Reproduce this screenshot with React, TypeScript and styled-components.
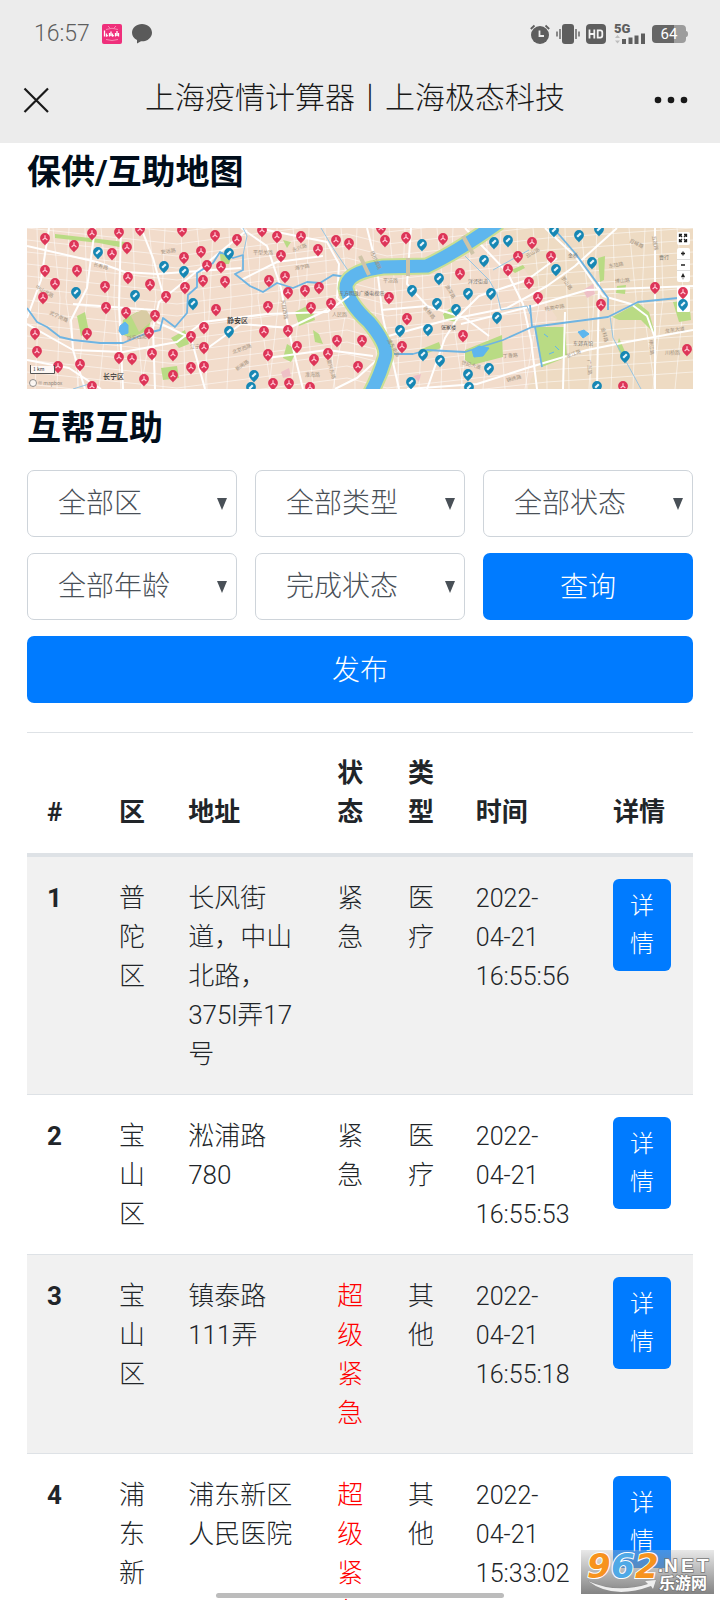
import React from 'react';
import styled, { createGlobalStyle } from 'styled-components';

const GlobalStyle = createGlobalStyle`
  *, *::before, *::after { box-sizing: border-box; }
  body {
    margin: 0;
    background: #fff;
    color: #212529;
    font-family: Roboto, "Noto Sans CJK SC", sans-serif;
    font-weight: 300;
  }
  button, select { font: inherit; }
`;

const Screen = styled.div`
  position: relative;
  height: 100vh;
  overflow: hidden;
`;

const TopArea = styled.header`
  background: #ececec;
`;

const StatusBar = styled.div`
  display: flex;
  justify-content: space-between;
  height: 56px;
  padding: 12px 32px 0 34px;
  color: #5e5e5e;
`;

const StatusGroup = styled.div<{ $gap: number }>`
  display: flex;
  align-items: center;
  gap: ${(p) => p.$gap}px;
`;

const Clock = styled.span`
  width: 58px;
  font-size: 23px;
  line-height: 40px;
`;

const NavBar = styled.div`
  display: flex;
  align-items: center;
  justify-content: space-between;
  height: 87px;
  padding: 0 32px 0 22px;
`;

const NavTitle = styled.h1`
  margin: 0;
  padding: 0 0 4px 6px;
  color: #191919;
  font-size: 30px;
  font-weight: 300;
  line-height: 40px;
  white-space: nowrap;
`;

const IconButton = styled.button`
  display: flex;
  padding: 0;
  border: 0;
  background: none;
  color: #191919;
`;

const Content = styled.main`
  padding: 9px 27px 0;
`;

const SectionTitle = styled.h2`
  margin: 0;
  color: #000d1a;
  font-size: 34px;
  font-weight: 700;
  line-height: 40px;
`;

const MapFigure = styled.figure`
  margin: 36px 0 19px;
  svg { display: block; width: 100%; height: auto; }
`;

const Filters = styled.form`
  display: grid;
  grid-template-columns: repeat(3, 1fr);
  gap: 16px 18px;
  margin: 22px 0 29px;
`;

const SelectBox = styled.label`
  position: relative;
  display: block;
  svg {
    position: absolute;
    top: 28px;
    right: 9px;
    pointer-events: none;
  }
`;

const Select = styled.select`
  appearance: none;
  display: block;
  width: 100%;
  height: 67px;
  padding: 0 30px;
  border: 1px solid #ced4da;
  border-radius: 7px;
  background: #fff;
  color: #495057;
  font-size: 28px;
`;

const PrimaryButton = styled.button<{ $wide?: boolean }>`
  grid-column: ${(p) => (p.$wide ? '1 / -1' : 'auto')};
  height: 67px;
  padding: 0 0 4px;
  border: 0;
  border-radius: 7px;
  background: #007bff;
  color: #fff;
  font-size: 28px;
`;

const Table = styled.table`
  width: 100%;
  table-layout: fixed;
  border-spacing: 0;
  font-size: 26px;
  line-height: 39px;
`;

const Column = styled.col<{ $share: number }>`
  width: ${(p) => p.$share}%;
`;

const HeadCell = styled.th`
  padding: 21px 20px;
  border-top: 1px solid #dee2e6;
  border-bottom: 4px solid #dee2e6;
  font-weight: 700;
  text-align: left;
  vertical-align: bottom;
`;

const Row = styled.tr`
  &:nth-child(odd) { background: #f1f1f1; }
  &:not(:first-child) > * { border-top: 1px solid #dee2e6; }
`;

const Cell = styled.td<{ $urgent?: boolean }>`
  padding: 22px 20px 20px;
  color: ${(p) => (p.$urgent ? '#f00' : 'inherit')};
  vertical-align: top;
`;

const IndexCell = styled(Cell)`
  font-weight: 700;
  text-align: left;
`;

const TimeCell = styled(Cell)`
  font-size: 25px;
  white-space: pre;
`;

const DetailButton = styled.button`
  display: block;
  width: 58px;
  padding: 8px 17px;
  border: 0;
  border-radius: 6px;
  background: #007bff;
  color: #fff;
  font-size: 24px;
  line-height: 38px;
`;

const HomeIndicator = styled.div`
  position: absolute;
  bottom: 2px;
  left: 30%;
  width: 40%;
  height: 5px;
  border-radius: 3px;
  background: #bcbcbc;
`;

const Watermark = styled.div`
  position: absolute;
  right: 6px;
  bottom: 6px;
  width: 133px;
  height: 44px;
  background: linear-gradient(rgba(190, 190, 190, 0.35), rgba(125, 125, 125, 0.95));
  svg { display: block; }
`;

type Point = [number, number];

const RED_PINS: Point[] = [
  [18, 10], [47, 17], [65, 5], [92, 4], [113, 1], [155, 2], [188, 7], [210, 11], [85, 25], [100, 19],
  [174, 23], [157, 29], [18, 42], [50, 42], [28, 55], [16, 69], [101, 49], [78, 58], [123, 56], [180, 37],
  [194, 38], [176, 52], [198, 53], [158, 59], [139, 68], [79, 79], [99, 84], [128, 87], [189, 81], [177, 99],
  [8, 105], [60, 105], [122, 104], [164, 108], [10, 123], [31, 138], [53, 136], [92, 129], [105, 130],
  [125, 125], [146, 126], [177, 119], [164, 139], [177, 138], [117, 151], [146, 147], [65, 158],
  [235, 2], [250, 8], [274, 8], [291, 21], [309, 12], [322, 15], [354, 0], [358, 12], [379, 9], [416, 10],
  [254, 27], [242, 52], [258, 48], [261, 64], [278, 62], [292, 59], [241, 78], [304, 75], [284, 79],
  [362, 69], [433, 45], [380, 90], [237, 103], [261, 102], [270, 118], [310, 112], [335, 112], [375, 118],
  [436, 107], [241, 126], [287, 131], [301, 125], [331, 138], [246, 155], [262, 155], [283, 159],
  [505, 14], [491, 28], [524, 28], [481, 41], [502, 54], [511, 69], [574, 76], [628, 59], [660, 121], [596, 158],
];

const BLUE_PINS: Point[] = [
  [71, 24], [49, 64], [108, 67], [137, 38], [157, 43], [202, 25], [166, 75], [202, 103],
  [395, 16], [412, 50], [385, 62], [441, 65], [410, 75], [429, 81], [373, 102], [401, 101], [396, 126],
  [413, 132], [227, 147], [224, 159], [441, 146], [384, 154], [442, 159],
  [467, 14], [481, 12], [527, 2], [552, 7], [572, 1], [457, 32], [529, 41], [565, 34], [464, 65], [470, 89],
  [598, 128], [462, 140], [570, 158],
];

const PARKS = [
  'M28 6 98 14 97 20 72 15 28 10z',
  'M96 92 110 84 124 88 122 102 104 110 94 106z',
  'M50 88 58 84 62 104 54 108z',
  'M144 110 158 102 162 116 152 120z',
  'M134 140 150 138 152 150 136 152z',
  'M193 26 206 24 202 36 194 36z',
  'M268 84 284 76 288 92 272 98z',
  'M260 116 270 122 264 134 256 130z',
  'M286 102 292 106 296 116 288 114z',
  'M416 86 424 80 430 94 418 92z',
  'M392 122 412 114 414 120 398 126z',
  'M508 99 538 99 540 129 515 139z',
  'M438 122 475 107 476 129 445 137 438 132z',
  'M585 89 611 75 622 84 628 106 614 92 592 92z',
  'M646 74 662 72 664 92 652 94z',
  'M590 58 599 57 598 66 589 65z',
  'M571 30 578 28 577 52 573 54z',
  'M592 110 600 128 596 132 590 118z',
  'M484 42 496 37 498 40 488 45z',
  'M256 12 264 14 260 20z',
];

const MAIN_ROADS = [
  'M0 18 70 34 98 44 130 46 214 40',
  'M22 0 14 52 0 90',
  'M68 0 60 60 44 92 46 122 58 161',
  'M94 0 92 78 96 161',
  'M114 0 126 30 136 66',
  'M128 161 126 100 132 74 164 48 220 2',
  'M0 96 46 122 96 124 150 114 176 94 240 86 300 84 330 62',
  'M46 76 100 80 128 82',
  'M130 94 164 110 178 161',
  'M178 122 214 96 262 100 300 82',
  'M214 0 240 18 254 60 262 104 276 161',
  'M230 0 300 14 312 36 310 70 346 104 352 130 330 150 308 161',
  'M214 52 250 34 296 28',
  'M240 130 300 122 346 128',
  'M340 0 350 40 356 90 372 161',
  'M354 82 400 78 438 90 462 108',
  'M354 110 420 92 480 80 520 58 548 38 590 0',
  'M384 0 380 56 402 80',
  'M400 161 418 110 432 88 452 68 500 52 530 30',
  'M438 0 480 44 496 76 504 112 510 161',
  'M518 0 548 28 576 68 604 76 620 88 628 110',
  'M380 161 450 156 500 140 560 122 600 114 666 102',
  'M572 54 570 161',
  'M628 0 628 161',
  'M434 96 506 78 560 62 666 58',
  'M538 84 536 161',
  'M0 132 42 140 74 161',
];

const STREAMS = [
  'M0 80 10 94 20 99 33 109 46 112 73 115 96 115 120 105 133 102 136 90 148 99 160 85 161 67 170 59 170 45 186 35 193 24 206 30 216 27 216 42 208 46 223 58 236 64 250 55 266 60 280 54 293 55 306 47 320 49',
  'M503 77 505 99 581 89 611 74 651 70',
  'M505 99 476 112 438 124 400 122 386 126 362 126',
  'M528 2 548 25 581 70 581 82',
  'M508 99 515 139',
];

const THIN_STREAMS = [
  'M216 27 220 8 216 0',
  'M294 0 306 20 322 44',
  'M438 28 462 52 470 66 474 82 500 78 503 86',
  'M466 42 502 22',
  'M583 88 586 110 596 128 614 161',
  'M46 161 62 156 68 161',
];

// Side streets: two skewed families of parallel lines covering the map.
const SIDE_STREETS = [
  ...Array.from({ length: 42 }, (_, i) => {
    const x = i * 16 - 6;
    return `M${x} 0 ${x + (i % 3) * 5 - 3} 70 ${x + (i % 4) * 6 - 8} 161`;
  }),
  ...Array.from({ length: 16 }, (_, i) => {
    const y = i * 12 - 12;
    return `M0 ${y} 150 ${y + 16} 320 ${y - 6} 360 ${y + 4} 520 ${y - 14} 666 ${y - 24}`;
  }),
];

const STREET_NAMES: [string, number, number, number][] = [
  ['长寿路', 66, 38, 15], ['中山北路', 8, 60, 30], ['武宁南路', 22, 86, 25], ['江宁路', 163, 120, 0],
  ['安远路', 134, 26, -8], ['北京西路', 206, 126, -20], ['延安西路', 100, 112, -6], ['新闸路', 210, 143, -35],
  ['平型关路', 226, 26, 0], ['永兴路', 266, 24, -20], ['海宁路', 268, 42, -10], ['天目西路', 254, 72, 80],
  ['人民路', 305, 88, 0], ['复兴东路', 300, 132, 75], ['淮海路', 278, 148, 0], ['杨树浦路', 343, 24, 65],
  ['平凉路', 356, 54, 0], ['浦东南路', 360, 112, 60], ['张杨路', 396, 80, 50], ['源深路', 418, 58, 60],
  ['世纪大道', 434, 136, 15], ['丁香路', 476, 130, -5], ['锦绣路', 480, 154, -15], ['杨高中路', 518, 83, -10],
  ['罗山路', 534, 50, 55], ['云山路', 500, 30, -30], ['东陆路', 582, 40, -10], ['博山路', 588, 55, -5],
  ['张江路', 540, 130, -20], ['龙东大道', 638, 105, -8], ['金科路', 574, 100, 75], ['申江路', 622, 112, 85],
  ['川桥路', 638, 126, 0], ['广兰路', 560, 132, 85], ['巨峰路', 602, 14, 25], ['五莲路', 625, 8, 80],
];

function MapPin({ at, color }: { at: Point; color: string }) {
  const rescue = color === '#1687b4';
  return (
    <g transform={`translate(${at[0]} ${at[1]})`}>
      <path d="M0 7.5C-1.7 5-4.9 3.3-4.9 0a4.9 4.9 0 0 1 9.8 0C4.9 3.3 1.7 5 0 7.5z" fill={color} />
      {rescue ? (
        <path d="M-1.8 1.8 1.8-1.8" stroke="#e8f6fb" strokeWidth="2.2" />
      ) : (
        <path d="M0-2.7V0L-2.4 2M0 0 2.4 2" stroke="#ffc4d2" strokeWidth="1.2" fill="none" />
      )}
    </g>
  );
}

function CityMap() {
  return (
    <svg viewBox="0 0 666 161" role="img" aria-label="保供/互助地图" fontFamily='"Noto Sans CJK SC", sans-serif' fontWeight="400">
      <rect width="666" height="161" fill="#f2dccb" />
      <path d="M470 0H666V161H500L530 90z" fill="#eedbc3" />
      <g fill="none" stroke="#fff" strokeOpacity="0.65" strokeWidth="0.8">
        {SIDE_STREETS.map((d) => <path key={d} d={d} />)}
      </g>
      <g fill="#b9db84">{PARKS.map((d) => <path key={d} d={d} />)}</g>
      <path d="M104 88 118 80 126 92 112 104z" fill="#d9cca4" />
      <path d="M254 144 262 140 264 148 256 150zM556 62 566 56 568 66 560 70zM386 148 394 146 392 154z" fill="#eec0c6" />
      <g fill="none" stroke="#fff" strokeWidth="2" strokeLinejoin="round">
        {MAIN_ROADS.map((d) => <path key={d} d={d} />)}
      </g>
      <g fill="none" stroke="#6fb4e2" strokeWidth="1.8" strokeLinejoin="round">
        {STREAMS.map((d) => <path key={d} d={d} />)}
      </g>
      <g fill="none" stroke="#8cc2e4" strokeWidth="0.9">
        {THIN_STREAMS.map((d) => <path key={d} d={d} />)}
      </g>
      <path d="M472-6Q430 24 400 38L356 39Q319 44 319 60Q322 76 342 94Q362 118 358 130Q352 150 342 168" fill="none" stroke="#c9df94" strokeWidth="17" />
      <path d="M472-6Q430 24 400 38L356 39Q319 44 319 60Q322 76 342 94Q362 118 358 130Q352 150 342 168" fill="none" stroke="#5eb6ee" strokeWidth="13" />
      <path d="M93 98 98 94 101 97 101 105 95 107 92 103zM445 122 452 118 462 120 456 128 447 129zM517 106 521 109M522 126 527 124M551 104 557 102 562 106 556 110zM528 118 532 122" fill="#5eb6ee" stroke="#5eb6ee" strokeWidth="1" />
      <path d="M300 84 322 68" stroke="#fff" strokeWidth="2" />
      <path d="M333 28 342 47M381 30 381 48M436 8 446 26" stroke="#cfc4a8" strokeWidth="4" />
      <g fontSize="5" fill="#a3927f">
        {STREET_NAMES.map(([name, x, y, angle]) => (
          <text key={name} transform={`translate(${x} ${y}) rotate(${angle})`}>{name}</text>
        ))}
      </g>
      <g fontSize="5" fill="#75716b">
        <text x="312" y="67">东方明珠广播电视塔</text>
        <text x="441" y="55">洋泾街道</text>
        <text x="541" y="29">金桥</text>
        <text x="632" y="31">曹行</text>
        <text x="546" y="117">东郊宾馆</text>
        <text x="414" y="101" fill="#444">张家楼</text>
      </g>
      <g fontSize="7" fontWeight="500" fill="#333">
        <text x="200" y="95">静安区</text>
        <text x="76" y="151">长宁区</text>
      </g>
      {RED_PINS.map((p) => <MapPin key={p.join()} at={p} color="#dd3558" />)}
      {BLUE_PINS.map((p) => <MapPin key={p.join()} at={p} color="#1687b4" />)}
      <g fill="#fff">
        <rect x="650" y="4" width="13" height="13" rx="2" />
        <rect x="650" y="20" width="13" height="34" rx="2" />
        <rect x="650" y="58" width="13" height="26" rx="1" />
        <rect x="3" y="138" width="25" height="7" fillOpacity="0.8" />
      </g>
      <path d="M650 31.5h13M650 42.500h13" stroke="#ddd" strokeWidth="1" />
      <path d="M652.5 9V6.500h2.500M657 6.500h2.500V9M659.500 11v2.500H657M655 13.500h-2.500V11M653 7l2 2M659 7l-2 2M659 13l-2-2M653 13l2-2M654 25.500h4M656 23.500v4M654 37h4" stroke="#222" strokeWidth="1.3" fill="none" />
      <path d="M656 45 658 49H654z" fill="#222" />
      <path d="M654 49h4L656 52z" fill="#bbb" />
      <MapPin at={[656, 64]} color="#dd3558" />
      <MapPin at={[656, 76]} color="#1687b4" />
      <path d="M3.500 137v8.500h24V137" stroke="#555" strokeWidth="1" fill="none" />
      <text x="6" y="143" fontSize="5" fill="#333">1 km</text>
      <circle cx="6" cy="155" r="3.5" fill="#fff" fillOpacity="0.7" stroke="#777" strokeWidth="0.8" />
      <text x="11" y="157" fontSize="5" fill="#8d8479">© mapbox</text>
    </svg>
  );
}

function NotificationIcons() {
  return (
    <>
      <svg width="20" height="20" viewBox="0 0 20 20" aria-label="bilibili">
        <rect width="20" height="20" rx="2" fill="#ef2f7b" />
        <path d="M6 2 8 4M14 2 12 4M4 5.500Q10 3 16 5.500M4 15.500Q10 17.500 16 15.500" stroke="#f98bb4" strokeWidth="1" fill="none" />
        <path d="M2.500 6.500V12.500M4.500 9.500v2.500l1.500-.5M7.500 9v3.500M9 7.500V12M10.500 9.500v2.500l1.500-.5M13.500 9v3.500M15 7V12M16.500 9v3.500" stroke="#fff" strokeWidth="1.300" fill="none" />
      </svg>
      <svg width="20" height="20" viewBox="0 0 20 20" aria-label="消息">
        <path d="M10 0C4.500 0 0 3.800 0 8.700c0 3.200 2 5.900 5 7.400V19.500l4-2.200h1c5.500 0 10-3.800 10-8.600S15.500 0 10 0z" fill="#5a5a5a" />
      </svg>
    </>
  );
}

function SystemIcons() {
  return (
    <>
      <svg width="20" height="20" viewBox="0 0 20 20" aria-label="闹钟">
        <circle cx="10" cy="11" r="9" fill="#5e5e5e" />
        <path d="M.8 5 4.500 1.500M19.200 5 15.500 1.500" stroke="#5e5e5e" strokeWidth="1.800" />
        <path d="M9.500 6.500V12H14" stroke="#ececec" strokeWidth="1.800" fill="none" />
      </svg>
      <svg width="24" height="20" viewBox="0 0 24 20" aria-label="振动">
        <rect x="6" width="12" height="20" rx="3" fill="#5e5e5e" />
        <path d="M1 7.500v5M4 5v10M20 5v10M23 7.500v5" stroke="#5e5e5e" strokeWidth="1.400" />
      </svg>
      <svg width="20" height="20" viewBox="0 0 20 20" aria-label="HD">
        <rect width="20" height="20" rx="4" fill="#5e5e5e" />
        <path d="M3.500 5.500v9M8.300 5.500v9M3.500 10h5M11.700 6.400h2.600q2 0 2 2v3.200q0 2-2 2h-2.600z" stroke="#f4f4f4" strokeWidth="1.800" fill="none" />
      </svg>
      <svg width="34" height="24" viewBox="-2 -2 34 24" aria-label="5G">
        <text x="0" y="9" fontFamily="Roboto, sans-serif" fontSize="13" fontWeight="900" fill="#5e5e5e">5G</text>
        <path d="M1 14 3.500 11 6 14zM1 16.500 3.500 19.500 6 16.500z" fill="#bdbdbd" />
        <path d="M10 20v-5M16.500 20v-6.500M22.500 20v-8.500M29 20V9.500" stroke="#5e5e5e" strokeWidth="4" />
      </svg>
      <svg width="36" height="18" viewBox="0 0 36 18" aria-label="电量 64%">
        <path d="M22 0h8a4 4 0 0 1 4 4v10a4 4 0 0 1-4 4h-8zM34 6q2 0 2 3t-2 3z" fill="#9c9c9c" />
        <path d="M22 0v18H4a4 4 0 0 1-4-4V4a4 4 0 0 1 4-4z" fill="#666" />
        <text x="17" y="14" textAnchor="middle" fontFamily="Roboto, sans-serif" fontSize="15" fontWeight="400" fill="#fff">64</text>
      </svg>
    </>
  );
}

function FilterSelect({ label }: { label: string }) {
  return (
    <SelectBox>
      <Select aria-label={label} defaultValue={label}>
        <option>{label}</option>
      </Select>
      <svg width="12" height="12" viewBox="0 0 12 12" aria-hidden="true">
        <path d="M1 0h10L6 12z" fill="#495057" />
      </svg>
    </SelectBox>
  );
}

const COLUMNS: [string, number][] = [
  ['#', 10.8], ['区', 10.4], ['地址', 22.4], ['状态', 10.6], ['类型', 10.2], ['时间', 20.6], ['详情', 15],
];

const REQUESTS = [
  { district: '普陀区', address: '长风街道，中山北路，375l弄17号', status: '紧急', kind: '医疗', time: '2022-\n04-21\n16:55:56' },
  { district: '宝山区', address: '淞浦路780', status: '紧急', kind: '医疗', time: '2022-\n04-21\n16:55:53' },
  { district: '宝山区', address: '镇泰路111弄', status: '超级紧急', kind: '其他', time: '2022-\n04-21\n16:55:18' },
  { district: '浦东新区', address: '浦东新区人民医院', status: '超级紧急', kind: '其他', time: '2022-\n04-21\n15:33:02' },
];

function WatermarkBadge() {
  return (
    <Watermark>
      <svg width="133" height="44" viewBox="0 0 133 44" fontFamily='"DejaVu Sans", "Noto Sans CJK SC", sans-serif' fontWeight="700" stroke="#fff" strokeWidth="2" paintOrder="stroke">
        <path d="M7 31Q35 44 67 34L64 31 75 30 72 39 70 36Q32 50 7 31z" fill="#eee" stroke="#888" strokeWidth="0.5" />
        <g fontSize="34" fontStyle="italic">
          <text x="6" y="28" fill="#f7931e">9</text>
          <text x="30" y="28" fill="#4fa9e6">6</text>
          <text x="54" y="28" fill="#f7931e">2</text>
        </g>
        <g fill="#fff" stroke="#777" strokeWidth="1.5">
          <text x="77" y="22" fontSize="18" fontFamily='"Liberation Sans", sans-serif'>.</text>
          <text x="83" y="22" fontSize="19" fontFamily='"Liberation Sans", sans-serif'>N</text>
          <text x="100" y="22" fontSize="19" fontFamily='"Liberation Sans", sans-serif'>E</text>
          <text x="116" y="22" fontSize="19" fontFamily='"Liberation Sans", sans-serif'>T</text>
          <text x="78" y="39" fontSize="16">乐游网</text>
        </g>
      </svg>
    </Watermark>
  );
}

export default function App() {
  return (
    <Screen>
      <GlobalStyle />
      <TopArea>
        <StatusBar>
          <StatusGroup $gap={10}>
            <Clock>16:57</Clock>
            <NotificationIcons />
          </StatusGroup>
          <StatusGroup $gap={6}>
            <SystemIcons />
          </StatusGroup>
        </StatusBar>
        <NavBar>
          <IconButton type="button" aria-label="关闭">
            <svg width="28" height="28" viewBox="0 0 28 28">
              <path d="M2.500 2.500 26 26M26 2.500 2.500 26" stroke="currentColor" strokeWidth="2.2" />
            </svg>
          </IconButton>
          <NavTitle>上海疫情计算器丨上海极态科技</NavTitle>
          <IconButton type="button" aria-label="更多">
            <svg width="34" height="8" viewBox="0 0 34 8" fill="currentColor">
              <circle cx="4" cy="4" r="3.3" />
              <circle cx="17" cy="4" r="3.3" />
              <circle cx="30" cy="4" r="3.3" />
            </svg>
          </IconButton>
        </NavBar>
      </TopArea>
      <Content>
        <SectionTitle>保供/互助地图</SectionTitle>
        <MapFigure>
          <CityMap />
        </MapFigure>
        <SectionTitle>互帮互助</SectionTitle>
        <Filters onSubmit={(e) => e.preventDefault()}>
          <FilterSelect label="全部区" />
          <FilterSelect label="全部类型" />
          <FilterSelect label="全部状态" />
          <FilterSelect label="全部年龄" />
          <FilterSelect label="完成状态" />
          <PrimaryButton type="submit">查询</PrimaryButton>
          <PrimaryButton type="button" $wide>发布</PrimaryButton>
        </Filters>
        <Table>
          <colgroup>
            {COLUMNS.map(([name, share]) => <Column key={name} $share={share} />)}
          </colgroup>
          <thead>
            <tr>
              {COLUMNS.map(([name]) => <HeadCell key={name} scope="col">{name}</HeadCell>)}
            </tr>
          </thead>
          <tbody>
            {REQUESTS.map((r, i) => (
              <Row key={r.time}>
                <IndexCell as="th" scope="row">{i + 1}</IndexCell>
                <Cell>{r.district}</Cell>
                <Cell>{r.address}</Cell>
                <Cell $urgent={r.status === '超级紧急'}>{r.status}</Cell>
                <Cell>{r.kind}</Cell>
                <TimeCell>{r.time}</TimeCell>
                <Cell><DetailButton type="button">详情</DetailButton></Cell>
              </Row>
            ))}
          </tbody>
        </Table>
      </Content>
      <HomeIndicator />
      <WatermarkBadge />
    </Screen>
  );
}
